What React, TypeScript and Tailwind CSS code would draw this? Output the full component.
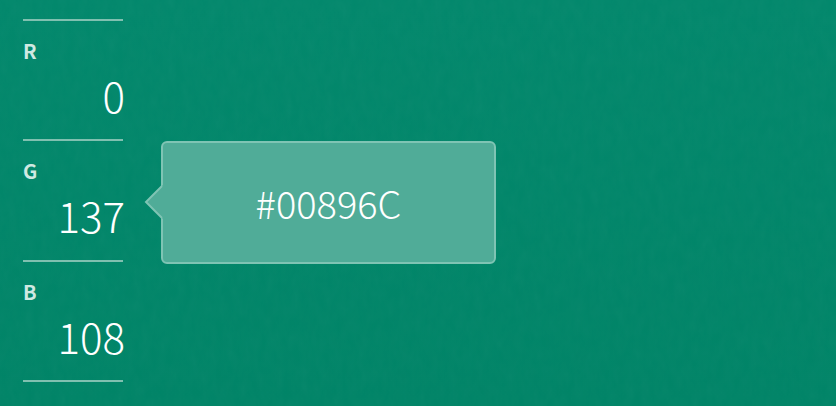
const channels = [
  { label: "R", value: 0 },
  { label: "G", value: 137 },
  { label: "B", value: 108 },
];

function PaperTexture() {
  return (
    <svg className="absolute inset-0 h-full w-full opacity-3" aria-hidden="true">
      <filter id="paper">
        <feTurbulence type="fractalNoise" baseFrequency="0.12 0.06" numOctaves="3" seed="4" />
        <feColorMatrix type="saturate" values="0" />
      </filter>
      <rect width="100%" height="100%" filter="url(#paper)" />
    </svg>
  );
}

function ChannelList() {
  return (
    <dl className="grid h-[363px] w-[100px] shrink-0 grid-rows-3 border-b-2 border-[#80c0b0]">
      {channels.map(({ label, value }) => (
        <div key={label} className="border-t-2 border-[#80c0b0] pt-4">
          <dt className="text-[20px] leading-7 font-bold text-[#cfe9e2]">{label}</dt>
          <dd className="-mr-0.5 text-right text-[42px] leading-[60px] font-light">{value}</dd>
        </div>
      ))}
    </dl>
  );
}

function HexBubble() {
  return (
    <div className="relative mt-1 flex h-[123px] w-[335px] items-center justify-center rounded-md border-2 border-[#7fc4b4] bg-[#50ac98]">
      <svg className="absolute top-[41px] -left-[19px] h-9 w-[19px]" viewBox="0 0 19 36" aria-hidden="true">
        <path d="M19 1 L2 18 L19 35 Z" fill="#50ac98" />
        <path d="M18 2 L2 18 L18 34" fill="none" stroke="#7fc4b4" strokeWidth="2" />
      </svg>
      <span className="text-[38px] leading-[46px] font-light">#00896C</span>
    </div>
  );
}

export default function App() {
  return (
    <main className="relative min-h-screen bg-linear-to-b from-[#02886c] to-[#008467] font-['Noto_Sans_CJK_JP','Noto_Sans',sans-serif] text-white">
      <PaperTexture />
      <div className="relative flex items-center gap-[38px] pt-[19px] pl-[23px]">
        <ChannelList />
        <HexBubble />
      </div>
    </main>
  );
}
